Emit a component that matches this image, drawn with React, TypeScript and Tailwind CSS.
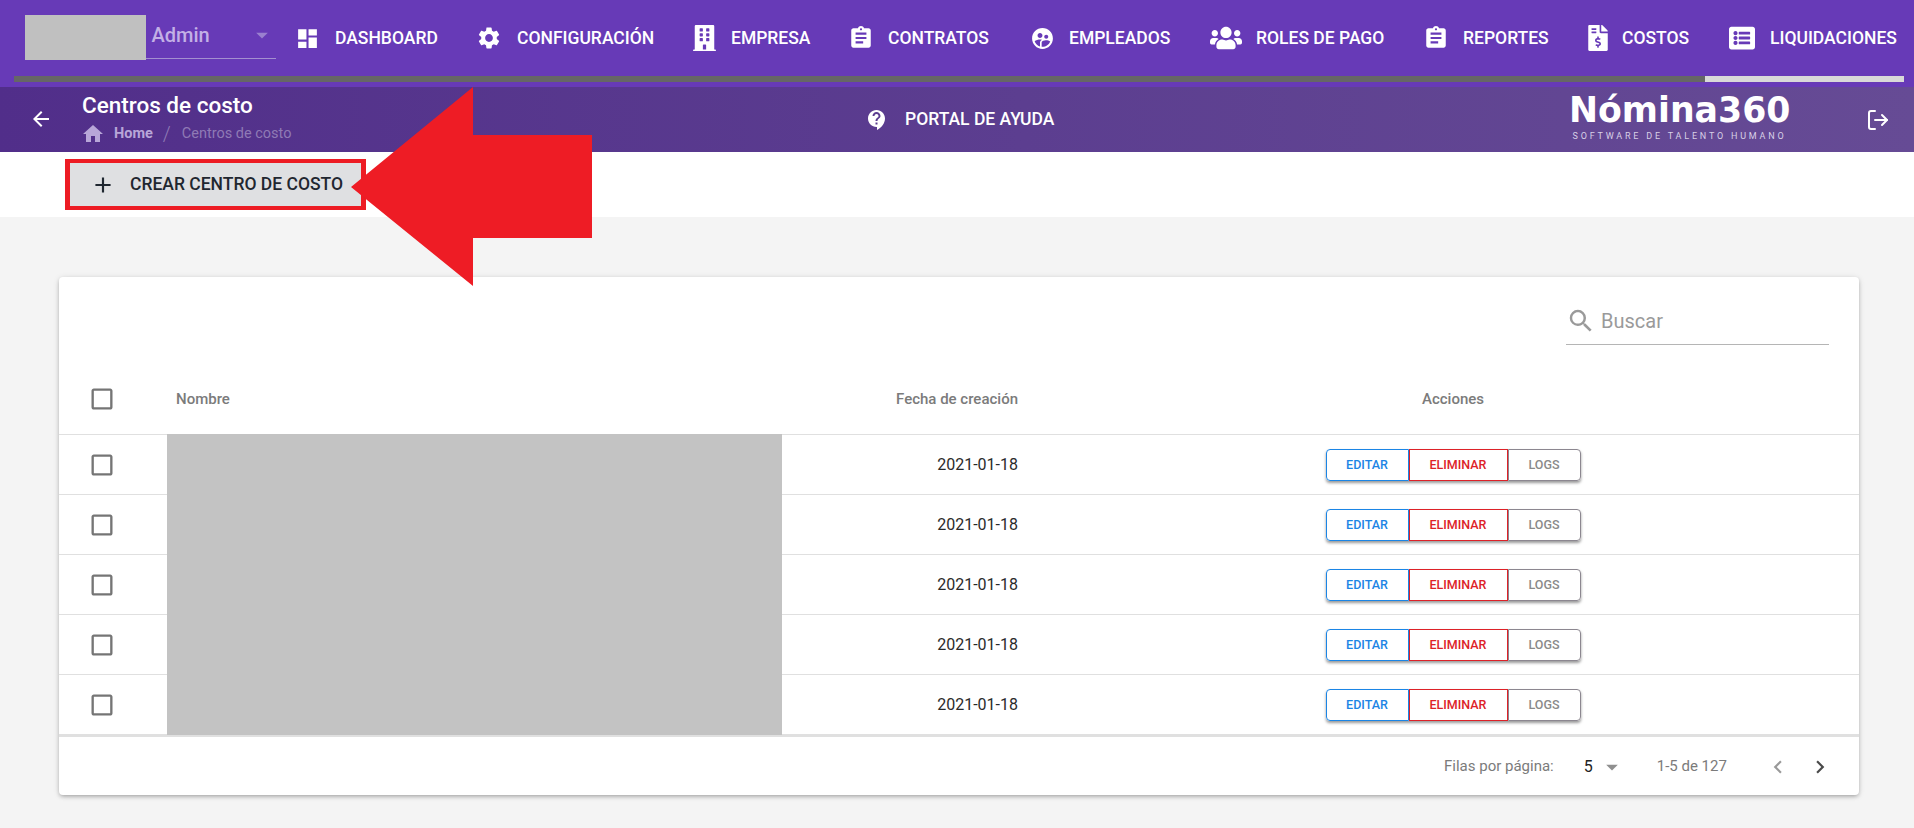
import type { ReactNode } from "react";
import { LogOut } from "lucide-react";
import { FaBuilding, FaFileInvoiceDollar, FaListAlt, FaUsers } from "react-icons/fa";
import {
  MdAdd,
  MdArrowBack,
  MdArrowDropDown,
  MdAssignment,
  MdCheckBoxOutlineBlank,
  MdChevronLeft,
  MdChevronRight,
  MdContactSupport,
  MdDashboard,
  MdHome,
  MdSearch,
  MdSettings,
  MdSupervisedUserCircle,
} from "react-icons/md";

const navItems: { label: string; icon: ReactNode; cls: string }[] = [
  { label: "DASHBOARD", icon: <MdDashboard className="w-[25px] h-[25px]" />, cls: "w-[182px] gap-[12px]" },
  { label: "CONFIGURACIÓN", icon: <MdSettings className="w-[26px] h-[26px]" />, cls: "w-[215px] gap-[12px]" },
  { label: "EMPRESA", icon: <FaBuilding className="w-[23px] h-[26px]" />, cls: "w-[157px] gap-[11px]" },
  { label: "CONTRATOS", icon: <MdAssignment className="w-[26px] h-[26px]" />, cls: "w-[181px] gap-[11px]" },
  { label: "EMPLEADOS", icon: <MdSupervisedUserCircle className="w-[25px] h-[25px]" />, cls: "w-[184px] gap-[11px]" },
  { label: "ROLES DE PAGO", icon: <FaUsers className="w-[32px] h-[26px]" />, cls: "w-[210px] gap-[14px]" },
  { label: "REPORTES", icon: <MdAssignment className="w-[26px] h-[26px]" />, cls: "w-[162px] gap-[11px]" },
  { label: "COSTOS", icon: <FaFileInvoiceDollar className="w-[20px] h-[26px]" />, cls: "w-[144px] gap-[8px]" },
  { label: "LIQUIDACIONES", icon: <FaListAlt className="w-[26px] h-[26px]" />, cls: "w-[188px] gap-[12px]" },
];

const rows = ["2021-01-18", "2021-01-18", "2021-01-18", "2021-01-18", "2021-01-18"];

function RowActions() {
  return (
    <div className="flex justify-center">
      <div className="flex h-[32px] rounded-[4px] shadow-[0_2px_3px_rgba(0,0,0,0.4)] text-[12.5px] font-medium">
        <button className="w-[83px] border border-[#1b85e5] rounded-l-[4px] text-[#1b85e5]">EDITAR</button>
        <button className="w-[99px] border border-[#dd2228] text-[#dd2228]">ELIMINAR</button>
        <button className="w-[73px] border border-[#8c8790] rounded-r-[4px] text-[#8a8a8a]">LOGS</button>
      </div>
    </div>
  );
}

export default function App() {
  return (
    <div className="relative h-[828px] overflow-hidden bg-[#f4f4f4] font-['Roboto',sans-serif]">
      <div className="h-[87px] bg-[#673ab7] text-white">
        <div className="flex h-[76px] items-center pl-[25px]">
          <div className="self-start mt-[15px] h-[45px] w-[121px] bg-[#c0c0c0]" />
          <div className="self-start mt-[15px] flex h-[44px] w-[131px] items-start justify-between border-b border-[#a48fd0] pl-[6px] text-[#c3b0e6]">
            <span className="text-[20px] font-medium leading-[40px]">Admin</span>
            <MdArrowDropDown className="mt-[6px] h-[28px] w-[28px] text-[#9a80cf]" />
          </div>
          <div className="ml-[15px] flex">
            {navItems.map((item) => (
              <div key={item.label} className={`flex items-center ${item.cls}`}>
                <span className="flex h-[28px] w-[32px] shrink-0 items-center justify-center">{item.icon}</span>
                <span className="text-[17.5px] font-medium whitespace-nowrap">{item.label}</span>
              </div>
            ))}
          </div>
        </div>
        <div className="ml-[14px] mr-[10px] flex h-[6px] bg-[#d9d9d9]">
          <div className="h-full w-[1691px] bg-[#666666]" />
        </div>
      </div>

      <div className="flex h-[65px] items-center bg-gradient-to-r from-[#512e8a] to-[#664b95] text-white">
        <MdArrowBack className="mb-[2px] ml-[29px] h-[24px] w-[24px]" />
        <div className="mb-[2px] ml-[29px] w-[783px]">
          <div className="text-[22.5px] font-medium leading-[28px]">Centros de costo</div>
          <div className="mt-[3px] flex items-center text-[14.5px] leading-[20px]">
            <MdHome className="-ml-[1px] h-[24px] w-[24px] text-[#b8a6d8]" />
            <span className="ml-[9px] font-bold text-[#b8a6d8]">Home</span>
            <span className="ml-[10px] mr-[11px] text-[20px] font-light text-[#8f7ab5]">/</span>
            <span className="text-[#8f7ab5]">Centros de costo</span>
          </div>
        </div>
        <MdContactSupport className="h-[24px] w-[24px]" />
        <span className="ml-[16px] w-[664px] text-[17.5px] font-medium">PORTAL DE AYUDA</span>
        <div className="mb-[4px] w-[221px] text-center">
          <div className="font-['DejaVu_Sans',sans-serif] text-[34.7px] font-bold leading-[34px] whitespace-nowrap">Nómina360</div>
          <div className="mt-[3px] text-[9px] leading-[12px] tracking-[2.8px] whitespace-nowrap text-[#d8d0e6]">SOFTWARE DE TALENTO HUMANO</div>
        </div>
        <LogOut className="ml-[76px] h-[24px] w-[24px]" strokeWidth={2} />
      </div>

      <div className="h-[65px] bg-white pl-[65px] pt-[7px]">
        <div className="h-[51px] w-[301px] border-x-[5px] border-y-[4px] border-[#ed1c24]">
          <button className="flex h-[43px] w-full items-center bg-[#dfe0e2] pl-[20px] text-[17.5px] font-medium text-[#1f2730]">
            <MdAdd className="h-[26px] w-[26px]" />
            <span className="ml-[14px] whitespace-nowrap">CREAR CENTRO DE COSTO</span>
          </button>
        </div>
      </div>

      <div className="mx-[59px] mt-[60px] h-[518px] w-[1800px] rounded-[4px] bg-white shadow-[0_2px_4px_-1px_rgba(0,0,0,0.3),0_1px_6px_rgba(0,0,0,0.12)]">
        <div className="flex h-[87px] justify-end pr-[30px]">
          <div className="mt-[20px] flex h-[48px] w-[263px] items-center border-b border-[#b5b5b5] text-[#9a9a9a]">
            <MdSearch className="h-[30px] w-[30px]" />
            <span className="ml-[5px] text-[20px]">Buscar</span>
          </div>
        </div>

        <div className="grid h-[71px] grid-cols-[108px_615px_265px_1fr] items-center border-b border-[#e0e0e0] text-[15px] font-medium text-[#7b7b7b]">
          <MdCheckBoxOutlineBlank className="ml-[29px] h-[28px] w-[28px] text-[#757575]" />
          <div className="pl-[9px]">Nombre</div>
          <div className="pr-[29px] text-right">Fecha de creación</div>
          <div className="text-center">Acciones</div>
        </div>

        {rows.map((date, i) => (
          <div key={i} className="grid h-[60px] grid-cols-[108px_615px_265px_1fr] items-center border-b border-[#e0e0e0] last-of-type:h-[59px]">
            <MdCheckBoxOutlineBlank className="ml-[29px] h-[28px] w-[28px] text-[#757575]" />
            <div className="relative -mt-px h-[61px] self-start bg-[#c3c3c3]" />
            <div className="pr-[29px] text-right text-[16px] text-[#2b2b2b]">{date}</div>
            <RowActions />
          </div>
        ))}

        <div className="flex h-[61px] items-center border-t-2 border-[#e0e0e0] text-[15px] text-[#7b7b7b]">
          <span className="ml-[1385px]">Filas por página:</span>
          <span className="ml-[30px] text-[16px] text-[#222222]">5</span>
          <MdArrowDropDown className="ml-[5px] h-[28px] w-[28px] text-[#8f8f8f]" />
          <span className="ml-[31px]">1-5 de 127</span>
          <MdChevronLeft className="ml-[38px] h-[26px] w-[26px] text-[#9a9a9a]" />
          <MdChevronRight className="ml-[16px] h-[26px] w-[26px] text-[#4a4a4a]" />
        </div>
      </div>

      <svg className="absolute left-[351px] top-[87px]" width="241" height="199" viewBox="0 0 241 199">
        <polygon points="0,100 122,0 122,48 241,48 241,151 122,151 122,199" fill="#ee1c25" />
      </svg>
    </div>
  );
}
